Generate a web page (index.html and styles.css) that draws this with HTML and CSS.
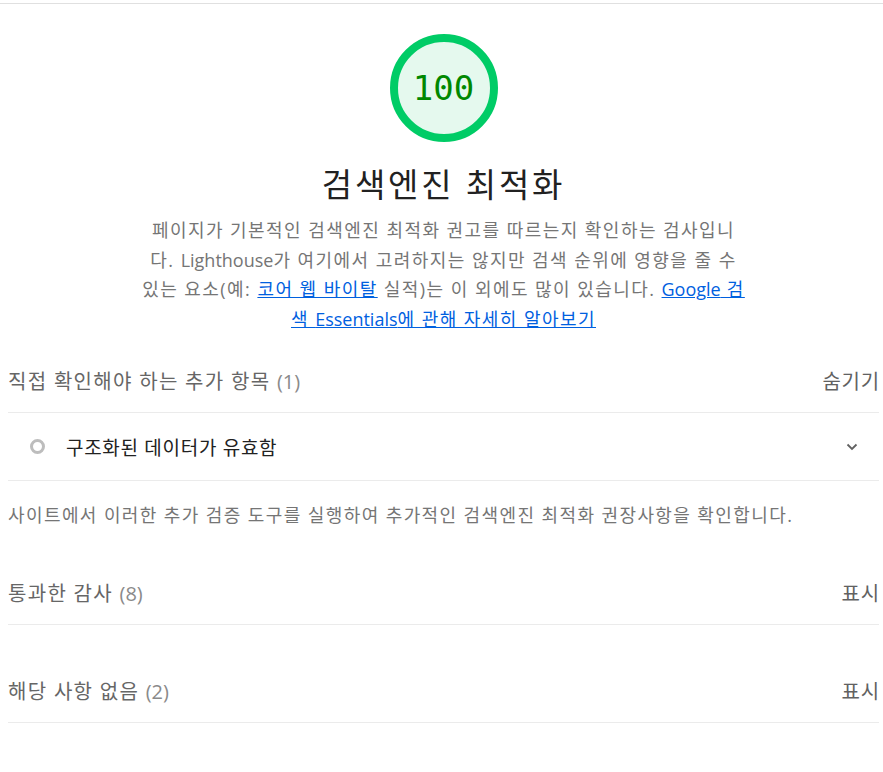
FILE: index.html
```html
<!DOCTYPE html>
<html lang="ko">
<head>
<meta charset="utf-8">
<title>검색엔진 최적화</title>
<link rel="stylesheet" href="styles.css">
</head>
<body>
<div class="top-rule"></div>
<div class="category">
  <div class="header">
    <div class="gauge">
      <svg class="gauge-svg" viewBox="0 0 116 116" width="116" height="116">
        <circle cx="58" cy="58" r="50" fill="#e5f9ee" stroke="#00cc66" stroke-width="8"/>
      </svg>
      <div class="gauge-score">100</div>
    </div>
    <h1 class="title">검색엔진 최적화</h1>
    <p class="description">페이지가 기본적인 검색엔진 최적화 권고를 따르는지 확인하는 검사입니<br>다. <span class="lat">Lighthouse</span>가 여기에서 고려하지는 않지만 검색 순위에 영향을 줄 수<br>있는 요소(예: <a href="#">코어 웹 바이탈</a> 실적)는 이 외에도 많이 있습니다. <a href="#"><span class="lat">Google</span> 검<br>색 <span class="lat">Essentials</span>에 관해 자세히 알아보기</a></p>
  </div>

  <div class="group">
    <div class="group-row">
      <span class="group-title">직접 확인해야 하는 추가 항목 <span class="count">(1)</span></span>
      <span class="toggle">숨기기</span>
    </div>
    <div class="audit">
      <span class="audit-icon"></span>
      <span class="audit-title">구조화된 데이터가 유효함</span>
      <svg class="chevron" viewBox="0 0 14 14" width="14" height="14"><path d="M2.5 4.5 L7 9 L11.5 4.5" fill="none" stroke="#616161" stroke-width="1.8"/></svg>
    </div>
    <p class="group-desc">사이트에서 이러한 추가 검증 도구를 실행하여 추가적인 검색엔진 최적화 권장사항을 확인합니다.</p>
  </div>

  <div class="group">
    <div class="group-row">
      <span class="group-title">통과한 감사 <span class="count">(8)</span></span>
      <span class="toggle">표시</span>
    </div>
  </div>

  <div class="group">
    <div class="group-row">
      <span class="group-title">해당 사항 없음 <span class="count">(2)</span></span>
      <span class="toggle">표시</span>
    </div>
  </div>
</div>
</body>
</html>
```

FILE: styles.css
```css
html, body {
  margin: 0;
  padding: 0;
  background: #ffffff;
}

body {
  font-family: "Open Sans", "Noto Sans CJK KR", sans-serif;
  color: #212121;
}

.lat {
  letter-spacing: 0;
}

.top-rule {
  margin-top: 3px;
  height: 0;
  border-top: 1px solid #e0e0e0;
}

.category {
  padding: 0 4px 0 8px;
}

.header {
  display: flex;
  flex-direction: column;
  align-items: center;
}

.gauge {
  position: relative;
  width: 116px;
  height: 116px;
  margin-top: 26px;
}

.gauge-svg {
  display: block;
}

.gauge-score {
  position: absolute;
  inset: 0;
  display: flex;
  align-items: center;
  justify-content: center;
  font-family: "DejaVu Sans Mono", monospace;
  font-size: 34px;
  color: #008800;
}

.title {
  margin: 19px 0 0;
  font-size: 33px;
  line-height: 40px;
  font-weight: 400;
  letter-spacing: 2.8px;
  color: #212121;
}

.description {
  margin: 11px 0 0;
  max-width: 640px;
  text-align: center;
  font-size: 18px;
  line-height: 29.5px;
  letter-spacing: 1.45px;
  color: #757575;
}

.description a {
  color: #0060df;
  text-decoration: underline;
}

.group {
  margin-top: 14px;
}

.group + .group {
  margin-top: 33px;
}

.group-row {
  display: flex;
  justify-content: space-between;
  align-items: center;
  height: 64px;
  border-bottom: 1px solid #ebebeb;
  font-size: 20px;
  letter-spacing: 1.3px;
  color: #666666;
}

.count {
  color: #8a8a8a;
  letter-spacing: 0;
}

.toggle {
  color: #616161;
  letter-spacing: 0.8px;
  margin-right: -1px;
}

.audit {
  display: flex;
  align-items: center;
  height: 67px;
  border-bottom: 1px solid #ebebeb;
  font-size: 19px;
  letter-spacing: 0.7px;
  color: #212121;
}

.audit-icon {
  width: 9px;
  height: 9px;
  border: 3px solid #bdbdbd;
  border-radius: 50%;
  margin-left: 22px;
  margin-right: 21px;
}

.audit-title {
  flex: 1;
}

.chevron {
  margin-right: 20px;
}

.group-desc {
  margin: 22px 0 0;
  font-size: 18px;
  line-height: 24px;
  letter-spacing: 1.4px;
  color: #757575;
}
```
